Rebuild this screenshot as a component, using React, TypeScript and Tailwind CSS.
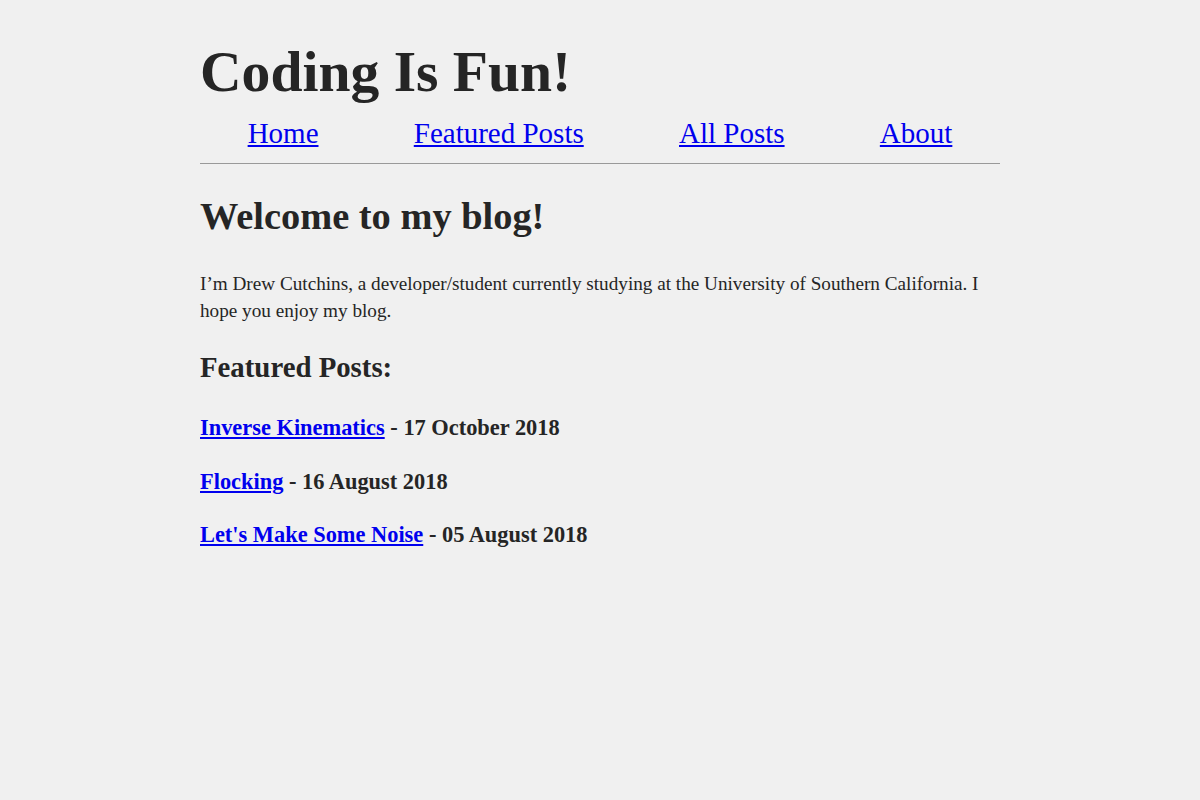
const navLinks = ['Home', 'Featured Posts', 'All Posts', 'About'];

const posts = [
  { title: 'Inverse Kinematics', date: '17 October 2018' },
  { title: 'Flocking', date: '16 August 2018' },
  { title: "Let's Make Some Noise", date: '05 August 2018' },
];

export default function App() {
  return (
    <div className="min-h-[800px] bg-[#f0f0f0] text-[#252525] font-['Liberation_Serif','Times_New_Roman',serif]">
      <div className="mx-auto w-[800px] pt-[37px]">
        <h1 className="text-[57.6px] font-bold leading-[70px]">Coding Is Fun!</h1>
        <nav className="mt-[9px] flex justify-around border-b border-[#999] pb-[13px] text-[29px] leading-[34px]">
          {navLinks.map((link) => (
            <a key={link} href="#" className="text-[#0000ee] underline">
              {link}
            </a>
          ))}
        </nav>
        <h2 className="mt-[28px] text-[38.4px] font-bold leading-[48px]">Welcome to my blog!</h2>
        <p className="mt-[30px] text-[19.2px] leading-[27px]">
          I’m Drew Cutchins, a developer/student currently studying at the University of Southern California. I hope
          you enjoy my blog.
        </p>
        <h3 className="mt-[25px] text-[28.8px] font-bold leading-[36px]">Featured Posts:</h3>
        <div className="mt-[27px] flex flex-col gap-[21.5px]">
          {posts.map((post) => (
            <div key={post.title} className="text-[22.4px] font-bold leading-[32px]">
              <a href="#" className="text-[#0000ee] underline">
                {post.title}
              </a>{' '}
              - {post.date}
            </div>
          ))}
        </div>
      </div>
    </div>
  );
}
